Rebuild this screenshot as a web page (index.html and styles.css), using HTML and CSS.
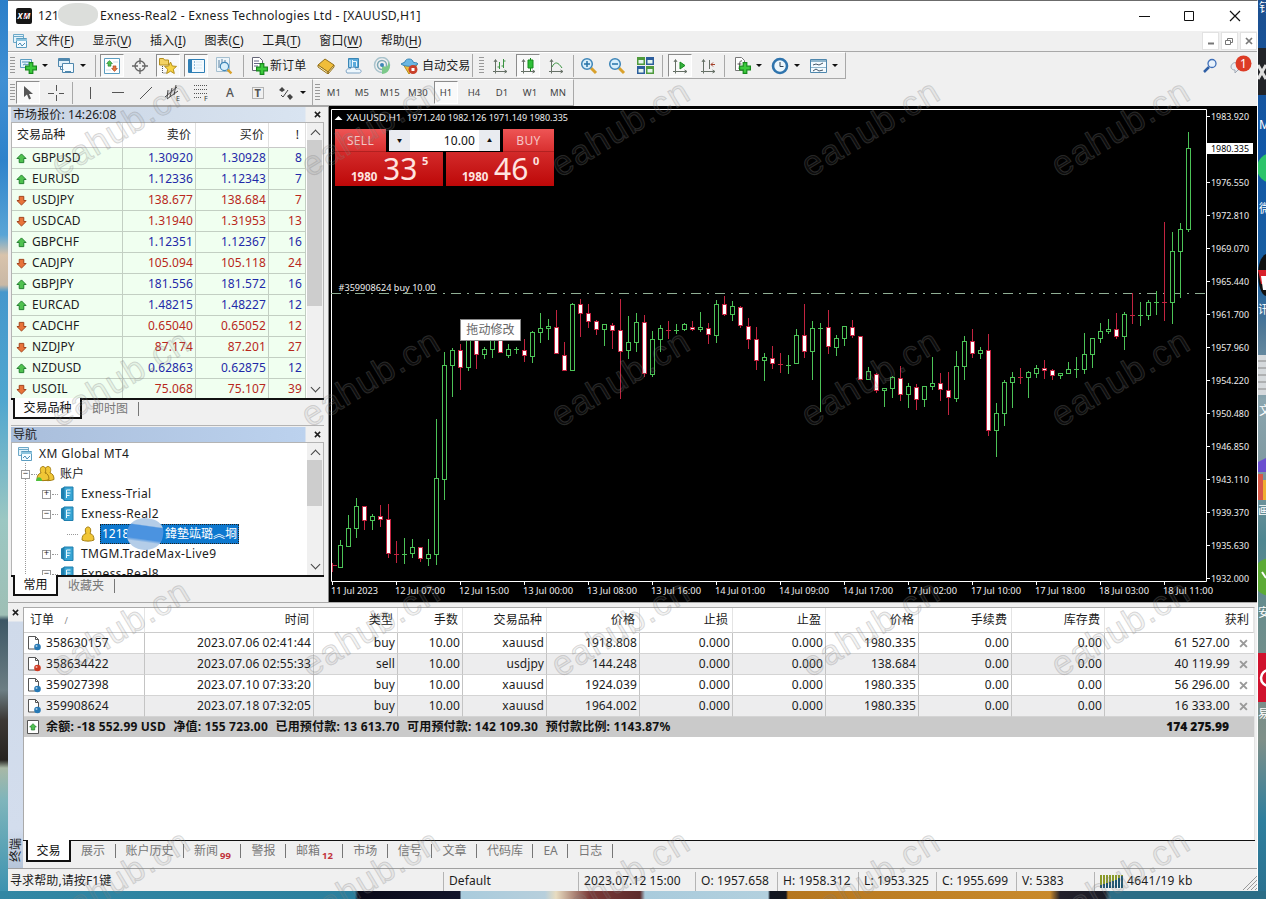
FILE: index.html
```html
<!DOCTYPE html>
<html lang="zh-CN">
<head>
<meta charset="utf-8">
<title>Exness-Real2 - Exness Technologies Ltd - [XAUUSD,H1]</title>
<link rel="stylesheet" href="styles.css">
</head>
<body>

<!-- shared icons -->
<svg width="0" height="0" class="defs">
  <symbol id="plus" viewBox="0 0 10 10"><path d="M3.500.5h3v3h3v3h-3v3h-3v-3h-3v-3h3z" fill="#3ccb3c" stroke="#168a1c"/></symbol>
  <symbol id="charts" viewBox="0 0 16 16">
    <path d="M1.500 1.500h10v8h-10z" fill="#e4f3fb" stroke="#6da9c8"/><path d="M1 3.500h11" stroke="#6da9c8"/>
    <path d="M4.500 5.500h10v9h-10z" fill="#f4fbff" stroke="#5b9dc0"/><path d="M4 7h11" stroke="#8cc4de" stroke-width="2"/>
    <path d="M6 12l2-2 2 3 3-3" fill="none" stroke="#4a8db5"/>
  </symbol>
  <symbol id="up" viewBox="0 0 12 12"><path d="M6 1l5 5H8.500v4.500h-5V6H1z" fill="#4fc24f" stroke="#1c7a2a"/></symbol>
  <symbol id="down" viewBox="0 0 12 12"><path d="M6 11l5-5H8.500V1.500h-5V6H1z" fill="#e8743a" stroke="#9c3a14"/></symbol>
  <symbol id="server" viewBox="0 0 14 16">
    <path d="M1 2.500l3-1.500v13l-3-1.500z" fill="#1f7fae"/><path d="M4 1h9v13.500H4z" fill="#38a5d4" stroke="#1f7fae"/>
    <path d="M6.500 12V4h4M6.500 7h4M6.500 9.500h3" fill="none" stroke="#e8f8ff"/>
  </symbol>
  <symbol id="person" viewBox="0 0 14 16">
    <path d="M1 14c0-4 1.500-6 4-6.500C3.500 4 4.500 1 7 1s3.500 3 2 6.500c2.500.5 4 2.500 4 6.500-3 1.500-9 1.500-12 0z" fill="#f0c636" stroke="#a57e10"/>
  </symbol>
  <symbol id="order" viewBox="0 0 16 16">
    <path d="M2.500 1.500h7l3 3v9.500h-10z" fill="#fff" stroke="#555"/><path d="M9.500 1.500v3h3" fill="none" stroke="#555"/>
    <circle cx="11.500" cy="12" r="3.300" fill="currentColor"/><circle cx="10.500" cy="11" r="1" fill="#fff" opacity=".6"/>
  </symbol>
  <symbol id="axes" viewBox="0 0 16 16"><path d="M3.500 2v11.500H15M2 4l1.500-2.500L5 4M12.500 12l2.500 1.500-2.500 1.500M1 13.500h2.500v2" fill="none" stroke="#667066"/></symbol>
  <symbol id="lens" viewBox="0 0 18 18"><path d="M11 11l5 5" stroke="#d9a12c" stroke-width="3"/><circle cx="7" cy="7" r="5.300" fill="#d8effb" stroke="#3f86b8" stroke-width="1.500"/></symbol>
  <symbol id="x" viewBox="0 0 8 8"><path d="M1 1l6 6M7 1l-6 6" stroke="currentColor" stroke-width="1.700"/></symbol>
</svg>

<div class="window">

  <div class="titlebar">
    <svg class="logo" width="16" height="16"><rect width="16" height="16" rx="2" fill="#161616"/><text x="1.500" y="11" font-size="8" font-weight="bold" font-style="italic" fill="#fff" textLength="13">XM</text><path d="M8 10l4-5" stroke="#d33"/></svg>
    <span class="acct">121<i class="blur"></i></span>
    <span class="caption">Exness-Real2 - Exness Technologies Ltd - [XAUUSD,H1]</span>
    <svg class="winbtns" width="104" height="12"><path d="M0 6.500h11" stroke="#111"/><path d="M45.500 1.500h9v9h-9z" fill="none" stroke="#111"/><path d="M91 1l10 10M101 1L91 11" stroke="#111" stroke-width="1.200"/></svg>
  </div>

  <div class="menubar">
    <svg width="16" height="16"><use href="#charts"/></svg>
    <span>文件(<u>F</u>)</span><span>显示(<u>V</u>)</span><span>插入(<u>I</u>)</span><span>图表(<u>C</u>)</span><span>工具(<u>T</u>)</span><span>窗口(<u>W</u>)</span><span>帮助(<u>H</u>)</span>
    <div class="mdi">
      <b><svg width="8" height="8"><path d="M1 6.500h6" stroke="#777" stroke-width="2"/></svg></b>
      <b><svg width="9" height="9"><path d="M2.500 3V1.500h5v4H6M.5 3.500h5v4h-5z" fill="none" stroke="#777"/></svg></b>
      <b><svg width="8" height="8" color="#777"><use href="#x"/></svg></b>
    </div>
  </div>

  <div class="tools-row">
    <div class="toolbar first">
      <i class="grip"></i>
      <div class="tool"><svg width="18" height="18"><path d="M1.500 2.500h11v8h-11z" fill="#e4f3fb" stroke="#5b9dc0"/><path d="M3 5h8M4 8l2-1 2 1 2-1" stroke="#4a8db5" fill="none"/><use href="#plus" x="6" y="5" width="12" height="12"/></svg></div><i class="drop"></i>
      <div class="tool"><svg width="18" height="18"><path d="M1.500 1.500h11v8h-11z" fill="#dff0fa" stroke="#4f87ad"/><path d="M1 3h12" stroke="#4f87ad" stroke-width="2"/><path d="M3.500 9.500v3h3M5.500 6.500h11v9h-11z" fill="#f4fbff" stroke="#4f87ad"/><path d="M8 15h6" stroke="#4f87ad" stroke-width="2"/></svg></div><i class="drop"></i>
      <i class="sep w8"></i>
      <div class="tool on"><svg width="16" height="16"><path d="M.5.5h15v15H.5z" fill="#fff" stroke="#5b9dc0"/><path d="M3 4h4M9 4h5M2 12h5" stroke="#cfe0ea"/><use href="#up" x="2" y="2" width="7" height="7"/><use href="#down" x="7" y="7" width="7" height="7"/></svg></div>
      <div class="tool"><svg width="16" height="16"><circle cx="8" cy="8" r="5" fill="none" stroke="#666" stroke-width="1.300"/><path d="M8 0v6M8 10v6M0 8h6M10 8h6" stroke="#666" stroke-width="1.300"/></svg></div>
      <div class="tool on"><svg width="18" height="18"><path d="M.5 1.500h4l1 1.500h4v5h-9z" fill="#f3d264" stroke="#b58f1d"/><path d="M3.500 9v7h4" stroke="#555" stroke-dasharray="1 1" fill="none"/><path d="M11.500 5l1.800 4 4.200.4-3.200 2.800 1 4.300-3.800-2.300-3.800 2.300 1-4.300-3.200-2.800 4.200-.4z" fill="#f7d445" stroke="#b58f1d"/></svg></div>
      <div class="tool on"><svg width="17" height="16"><path d="M.5 1.500h16v13H.5z" fill="#f3faff" stroke="#2f7fb5"/><path d="M1 2h3v12H1z" fill="#2f7fb5"/><path d="M6 4h1M6 7h1M6 10h1" stroke="#2f7fb5"/><path d="M8 4h6M8 7h6M8 10h6" stroke="#dbe8f0"/></svg></div>
      <div class="tool"><svg width="18" height="18"><path d="M1.500.5h13v14h-13z" fill="#edf5fa" stroke="#a5bfd0"/><path d="M4 3v8M7 2v6M10 3v4" stroke="#5b80a0"/><use href="#lens" x="4" y="4" width="14" height="14"/></svg></div>
      <i class="sep w8"></i>
      <div class="tool label order"><svg width="18" height="18"><path d="M2.500.5h7l3 3v10h-10z" fill="#fff" stroke="#667"/><path d="M4 4h5M4 6.500h7M4 9h4" stroke="#668"/><use href="#plus" x="6" y="6" width="12" height="12"/></svg>新订单</div>
      <div class="tool"><svg width="18" height="16"><path d="M1 7l7-6 9 6-6 7z" fill="#f0bd3a" stroke="#94701a"/><path d="M1 7v2l10 7v-2zM17 7v2l-6 7v-2z" fill="#fff2c0" stroke="#94701a"/></svg></div>
      <div class="tool"><svg width="18" height="18"><path d="M3.500 1.500h10v9h-10z" fill="#5aa9da" stroke="#3a86b5"/><path d="M7.500 3v7M7.500 4.500h4v5M5 3v7" stroke="#e8f6fe" fill="none"/><path d="M2 16c-2.500-3 1-5 3-4 2-3 6-2 6 .5 5-2 7 3.500 3 3.500z" fill="#edf7fd" stroke="#7fa3c3"/></svg></div>
      <div class="tool"><svg width="18" height="18" fill="none"><circle cx="9" cy="8" r="7.500" stroke="#a9c3cc" stroke-width="1.500"/><circle cx="9" cy="8" r="4.500" stroke="#7fa9b6" stroke-width="1.500"/><path d="M9 8v9c5 0 8-4 8-9l-2-4c1 4-1 8-6 4z" fill="#7cc98a"/><circle cx="9" cy="8" r="2" fill="#3f86b8"/></svg></div>
      <div class="tool label auto"><svg width="20" height="18"><path d="M3 7l6 10 8-9z" fill="#f0bd3a" stroke="#b58f1d"/><path d="M1 7c1-1 3-1 4-2 0-4 8-4 8 0 1 1 4 0 5 2-4 3-13 3-17 0z" fill="#6bb7e3" stroke="#3a86b5"/><circle cx="13" cy="12.500" r="4.500" fill="#c9402a"/><path d="M11.500 11h3v3h-3z" fill="#fff"/></svg>自动交易</div>
      <i class="grip"></i>
      <div class="tool bars"><svg width="16" height="16"><use href="#axes"/><path d="M7.500 4v7M5.500 9h2M11.500 1v9M11.500 3h2M9.500 8h2" stroke="#3a9340"/></svg></div>
      <div class="tool on"><svg width="16" height="16"><use href="#axes"/><path d="M10.500 0v13" stroke="#168a1c"/><path d="M8 2h5v8H8z" fill="#2fc038" stroke="#168a1c"/></svg></div>
      <div class="tool"><svg width="16" height="16"><use href="#axes"/><path d="M4 9c3-6 6-5 10 1" stroke="#3a9340" fill="none"/></svg></div>
      <i class="sep w5"></i>
      <div class="tool"><svg width="18" height="18"><use href="#lens"/><path d="M4 7h6M7 4v6" stroke="#2673a8" stroke-width="1.500"/></svg></div>
      <div class="tool"><svg width="18" height="18"><use href="#lens"/><path d="M4 7h6" stroke="#2673a8" stroke-width="1.500"/></svg></div>
      <div class="tool"><svg width="17" height="17"><path d="M0 0h8v8H0zM9 9h8v8H9z" fill="#4f9a3c"/><path d="M9 0h8v8H9zM0 9h8v8H0z" fill="#2c5e9c"/><path d="M1.500 3h5v3.500h-5zM10.500 3h5v3.500h-5zM1.500 12h5v3.500h-5zM10.500 12h5v3.500h-5z" fill="#e6f5ee"/></svg></div>
      <i class="sep w7"></i>
      <div class="tool on"><svg width="16" height="16"><use href="#axes"/><path d="M8 4l5 3.500-5 3.500z" fill="#35b13d" stroke="#168a1c"/></svg></div>
      <div class="tool"><svg width="16" height="16"><use href="#axes"/><path d="M9.500 2v9" stroke="#667066"/><path d="M15 6.500h-4M13 4.500l-2 2 2 2" stroke="#a3402a" fill="none"/></svg></div>
      <i class="sep w6"></i>
      <div class="tool"><svg width="18" height="18"><path d="M2.500.5h6l3 3v10h-9z" fill="#fff" stroke="#777"/><path d="M9 4c-3-1-2 3-3 8M4.500 7h4" stroke="#555" fill="none"/><use href="#plus" x="6" y="5" width="12" height="12"/></svg></div><i class="drop"></i>
      <div class="tool"><svg width="18" height="18"><circle cx="9" cy="9" r="7" fill="#eef7fc" stroke="#2f74ad" stroke-width="2.600"/><path d="M9 5v4.500h3.500" stroke="#345" fill="none"/></svg></div><i class="drop"></i>
      <div class="tool"><svg width="17" height="16"><path d="M.5 1.500h16v13H.5z" fill="#f4fbff" stroke="#4f87ad"/><path d="M1 3h15" stroke="#8fb5cc" stroke-width="2"/><path d="M1 9.500h15" stroke="#8fb5cc"/><path d="M3 7l3-1 3 1 4-2M3 13l3-2 3 2 4-1" stroke="#456" fill="none"/></svg></div><i class="drop"></i>
    </div>
    <div class="right-tools">
      <svg width="15" height="15"><path d="M1 14l5-5" stroke="#2f5fa5" stroke-width="2.500"/><circle cx="9" cy="5.500" r="4" fill="#e8f2fc" stroke="#3f6fb8" stroke-width="1.300"/></svg>
      <svg width="24" height="22"><path d="M3 12c0-3 3-5 6-4.500 5 0 6 6 1 7.500l-3 3v-3c-2 0-4-1-4-3z" fill="#e9edf2" stroke="#a0a8b4"/><circle cx="15.500" cy="8.500" r="8" fill="#dd3b25"/><text x="12" y="13" font-size="12" fill="#fff">1</text></svg>
    </div>
  </div>

  <div class="tools-row second">
    <div class="toolbar draw">
      <i class="grip"></i>
      <div class="tool on"><svg width="12" height="16"><path d="M2 1v11l3-2.500 2 5 2-1-2-4.500h4z" fill="#555"/></svg></div>
      <div class="tool"><svg width="16" height="16"><path d="M8.500 0v6M8.500 10v6M0 8.500h6M11 8.500h5" stroke="#555"/></svg></div>
      <i class="sep w6"></i>
      <div class="tool"><svg width="3" height="14"><path d="M1.500 1v12" stroke="#555"/></svg></div>
      <div class="tool"><svg width="14" height="3"><path d="M1 1.500h12" stroke="#555"/></svg></div>
      <div class="tool"><svg width="14" height="14"><path d="M1 13L13 1" stroke="#555"/></svg></div>
      <div class="tool"><svg width="20" height="20"><path d="M1 14L13 4M3 16L14 8M4 7L3 15M8 5L6 14M12 2l-2 10" stroke="#444"/><text x="12" y="18" font-size="7" fill="#333">E</text></svg></div>
      <div class="tool"><svg width="20" height="20"><path d="M2 2.500h14M2 6.500h14M2 10.500h14M2 14.500h8" stroke="#555" stroke-dasharray="1 1"/><text x="12" y="18" font-size="7" fill="#333">F</text></svg></div>
      <div class="tool letter">A</div>
      <div class="tool"><svg width="16" height="18"><path d="M2.500 3.500h11v11h-11z" fill="none" stroke="#777" stroke-dasharray="1 1"/><text x="4.500" y="13" font-size="11" font-weight="bold" fill="#555">T</text></svg></div>
      <div class="tool"><svg width="16" height="14"><path d="M1 4l3-3 3 3-3 2zM9 10l3-2 3 3-3 3z" fill="#444"/><path d="M3 9l2 2 5-7" stroke="#444" fill="none"/></svg></div><i class="drop"></i>
    </div>
    <div class="toolbar frames">
      <i class="grip"></i>
      <div class="tool">M1</div><div class="tool">M5</div><div class="tool">M15</div><div class="tool">M30</div><div class="tool on">H1</div><div class="tool">H4</div><div class="tool">D1</div><div class="tool">W1</div><div class="tool">MN</div>
    </div>
  </div>

  <div class="workspace">
    <div class="dock">
      <div class="panel market">
        <div class="panel-head"><span>市场报价: 14:26:08</span><svg width="7" height="7"><use href="#x"/></svg></div>
        <div class="panel-body">
          <table class="quotes">
            <colgroup><col class="c-sym"><col class="c-bid"><col class="c-ask"><col></colgroup>
            <thead><tr><th>交易品种</th><th>卖价</th><th>买价</th><th>!</th></tr></thead>
            <tbody id="quotes"></tbody>
          </table>
          <div class="scroll"><div class="thumb"></div></div>
        </div>
        <div class="tabs"><span class="active">交易品种</span><span>即时图</span></div>
      </div>

      <div class="panel nav">
        <div class="panel-head"><span>导航</span><svg width="7" height="7"><use href="#x"/></svg></div>
        <div class="panel-body">
          <div class="tree">
            <div class="node"><svg width="16" height="16"><use href="#charts"/></svg>XM Global MT4</div>
            <div class="node l1"><i class="box">−</i><svg width="20" height="18"><use href="#person" x="6" y="0" width="14" height="17"/><use href="#person" x="1" y="0" width="14" height="17"/><path d="M1 16c0-5 6-5 6 0z" fill="#4fbf3c"/></svg>账户</div>
            <div class="node l2"><i class="box">+</i><svg width="14" height="16"><use href="#server"/></svg>Exness-Trial</div>
            <div class="node l2"><i class="box">−</i><svg width="14" height="16"><use href="#server"/></svg>Exness-Real2</div>
            <div class="node l3"><svg width="14" height="16"><use href="#person"/></svg><span class="sel"><span>1218</span><span>鍏墊竑璐︽埛</span><i class="blur"></i></span></div>
            <div class="node l2"><i class="box">+</i><svg width="14" height="16"><use href="#server"/></svg>TMGM.TradeMax-Live9</div>
            <div class="node l2"><i class="box">−</i><svg width="14" height="16"><use href="#server"/></svg>Exness-Real8</div>
          </div>
          <div class="scroll"><div class="thumb"></div></div>
        </div>
        <div class="tabs"><span class="active">常用</span><span>收藏夹</span></div>
      </div>
    </div>

    <div class="chart">
      <svg id="chart" width="928" height="496" viewBox="329 106 928 496"></svg>
      <div class="trade">
        <div class="row top">
          <div class="side">SELL</div>
          <div class="lots"><i>▼</i><span>10.00</span><i>▲</i></div>
          <div class="side">BUY</div>
        </div>
        <div class="row">
          <div class="price"><small>1980</small><big>33</big><sup>5</sup></div>
          <div class="price"><small>1980</small><big>46</big><sup>0</sup></div>
        </div>
      </div>
      <div class="tip">拖动修改</div>
    </div>
  </div>

  <div class="terminal">
    <div class="strip"><svg width="7" height="7"><use href="#x"/></svg><span>终端</span></div>
    <div class="term-main">
      <div class="term-body">
        <table class="orders">
          <colgroup><col class="o1"><col class="o2"><col class="o3"><col class="o4"><col class="o5"><col class="p"><col class="p"><col class="p"><col class="p"><col class="p"><col class="p"><col></colgroup>
          <thead><tr><th>订单 <em>/</em></th><th>时间</th><th>类型</th><th>手数</th><th>交易品种</th><th>价格</th><th>止损</th><th>止盈</th><th>价格</th><th>手续费</th><th>库存费</th><th>获利</th></tr></thead>
          <tbody id="orders"></tbody>
        </table>
        <div class="balance">
          <svg width="12" height="14"><path d="M.5.5h11v13H.5z" fill="#fff" stroke="#555"/><use href="#up" x="2" y="3" width="8" height="8"/></svg>
          <span>余额: -18 552.99 USD</span><span>净值: 155 723.00</span><span>已用预付款: 13 613.70</span><span>可用预付款: 142 109.30</span><span>预付款比例: 1143.87%</span>
          <b>174 275.99</b>
        </div>
      </div>
      <div class="tabs">
        <span class="active">交易</span><span>展示</span><span>账户历史</span><span>新闻<b>99</b></span><span>警报</span><span>邮箱<b>12</b></span><span>市场</span><span>信号</span><span>文章</span><span>代码库</span><span>EA</span><span>日志</span>
      </div>
    </div>
  </div>

  <div class="status">
    <span class="s-help">寻求帮助,请按F1键</span><span class="s-prof">Default</span><span class="s-date">2023.07.12 15:00</span><span class="s-o">O: 1957.658</span><span class="s-h">H: 1958.312</span><span class="s-l">L: 1953.325</span><span class="s-c">C: 1955.699</span><span class="s-v">V: 5383</span>
    <span class="s-net"><svg width="24" height="13" shape-rendering="crispEdges"><path d="M1 0v13M4 0v13M7 0v13M10 0v13M13 0v13M16 0v13M19 0v13M22 0v13" stroke="#8a9a28" stroke-width="2"/><path d="M1 10v3M4 9v4M7 8v5M10 7v6M13 6v7M16 5v8M19 3v10M22 1v12" stroke="#1d5470" stroke-width="2"/></svg>4641/19 kb</span>
    <svg class="resize" width="15" height="15"><path d="M1 15L15 1M5 15L15 5M9 15l6-6M13 15l2-2" stroke="#999"/></svg>
  </div>
</div>

<!-- desktop icons behind the right edge -->
<svg class="desk" width="8" height="899">
  <rect y="48" width="8" height="47" fill="#222428"/><path d="M0 65l8 14M0 79l8-14" stroke="#ddd" stroke-width="3"/>
  <circle cx="14" cy="168" r="15" fill="#2bc46a"/>
  <path d="M8 254c-12 6-9 40 0 42z" fill="#111"/><path d="M0 270h8v14H3z" fill="#d9202a"/><path d="M3 276h5v14H5z" fill="#fff"/>
  <rect y="355" width="8" height="40" fill="#d5d9dc"/><path d="M0 361h8M0 368h8M0 375h8M0 382h8M0 389h8" stroke="#888"/>
  <path d="M0 462l8-4v14H0z" fill="#6a4fd0"/><path d="M0 474h5v26H0z" fill="#d8574a"/><path d="M5 480h3v20H5z" fill="#f0b030"/>
  <circle cx="13" cy="577" r="19" fill="#5cab35"/><path d="M4 572l4 6" stroke="#fff" stroke-width="2"/>
  <rect y="653" width="8" height="49" fill="#d0122d"/><circle cx="11" cy="678" r="8" fill="none" stroke="#fff" stroke-width="2.500"/>
  <g fill="#fff" font-size="12"><text x="1" y="12">钉</text><text x="1" y="129">M</text><text x="1" y="213">微</text><text x="0" y="314">讯</text><text x="1" y="415">文</text><text x="0" y="515">画</text><text x="0" y="617">安</text><text x="0" y="718">易</text></g>
</svg>

<svg class="marks" id="marks" width="1266" height="899"></svg>

<script src="script.js"></script>
</body>
</html>
```
FILE: styles.css
```css
* { box-sizing: border-box; }
body {
    margin: 0;
    width: 1266px;
    height: 899px;
    overflow: hidden;
    position: relative;
    font: 12px/16px "Noto Sans", "Noto Sans CJK SC", sans-serif;
    letter-spacing: .1px;
    color: #1c1c1c;
    background:
        linear-gradient(90deg, #3287a4 0, #2b7f9d 355px, #0a0a18 358px, #12142a 460px, #a9cbdc 461px, #b7cfdc 545px, #e8dcc0 556px, #7a3a38 590px, #5d2b2b 640px, #a9cbdc 645px, #b3d0de 768px, #111520 770px, #14161f 786px, #b5761f 788px, #c98a2c 1050px, #23202a 1060px, #1c1c26 1105px, #2c6d86 1110px) 0 891px / 1266px 8px no-repeat,
        linear-gradient(#1c4f8f 0, #1158a8 150px, #1a5f9f 280px, #4f7896 330px, #8aa5ae 400px, #7f98a0 470px, #4e8690 540px, #6b8d8c 620px, #7f8f88 740px, #2e7f9e 820px, #2b7290) 1258px 0 / 8px 891px no-repeat,
        linear-gradient(#2b7fc9 0, #3f8fd3 80px, #2e82cb 160px, #5aa5d6 235px, #d8c3ab 255px, #c9b8a5 285px, #4597cc 292px, #4fa6cf 400px, #9bc7c2 520px, #9ebfb5 615px, #3c5665 620px, #6c7e84 690px, #3c3835 720px, #262320 760px, #a8b8a6 768px, #7fb5bb 800px, #3d93b0) 0 0 / 8px 891px no-repeat;
}
i, em { font-style: normal; }
.defs { position: absolute; }
svg { flex: none; display: block; }

.window {
    width: 1250px;
    height: 891px;
    margin-left: 8px;
    background: #f0f0f0;
    border-top: 1px solid #6b6b6b;
    border-right: 1px solid #fff;
    display: flex;
    flex-direction: column;
}

/* title and menu */
.titlebar {
    height: 30px;
    flex: none;
    background: #fff;
    display: flex;
    align-items: center;
    padding: 0 14px 0 8px;
}
.acct { position: relative; margin-left: 6px; width: 62px; }
.titlebar .blur {
    position: absolute;
    left: 20px;
    top: -5px;
    width: 40px;
    height: 23px;
    border-radius: 45%;
    background: #dcdedb;
}
.titlebar .caption { flex: 1; font-size: 12.2px; letter-spacing: .22px; }
.menubar {
    height: 21px;
    flex: none;
    display: flex;
    align-items: center;
    padding-left: 4px;
    border-bottom: 1px solid #a8a8a8;
}
.menubar > svg { margin-right: 8px; }
.menubar > span { margin-right: 18.6px; }
.menubar u { text-underline-offset: 2px; }
.mdi { margin-left: auto; display: flex; gap: 2px; }
.mdi b {
    width: 17px;
    height: 18px;
    background: #fff;
    border: 1px solid #e2e2e2;
    display: flex;
    align-items: center;
    justify-content: center;
}

/* toolbars */
.tools-row { height: 27px; flex: none; display: flex; justify-content: space-between; }
.tools-row.second { justify-content: flex-start; }
.toolbar {
    display: flex;
    align-items: center;
    height: 27px;
    border-bottom: 1px solid #a8a8a8;
    border-right: 1px solid #a8a8a8;
    border-top: 1px solid #fff;
}
.toolbar.first { width: 838px; }
.toolbar.draw { width: 305px; }
.toolbar.frames { width: 261px; font-size: 9.5px; color: #444; }
.grip {
    width: 5px;
    height: 18px;
    margin: 0 1px 0 2px;
    flex: none;
    background: repeating-linear-gradient(#999 0 1px, #f0f0f0 1px 3px);
}
.tool {
    width: 24px;
    height: 23px;
    margin-right: 4px;
    flex: none;
    display: flex;
    align-items: center;
    justify-content: center;
}
.tool.on { background: #f9f9f9; border: 1px solid #fff; border-top-color: #8c8c8c; border-left-color: #8c8c8c; }
.tool:has(+ .drop) { margin-right: 0; }
.tool.label { justify-content: flex-start; white-space: nowrap; }
.tool.order { width: 62px; gap: 2px; padding-left: 2px; }
.tool.auto { width: 75px; gap: 2px; padding-left: 2px; border-right: 1px solid #a8a8a8; }
.tool.bars { margin-left: 3px; }
.tool.letter { color: #555; font-weight: 500; }
.frames .tool:nth-child(2) { margin-left: 1px; }
.drop { width: 10px; margin-right: 4px; flex: none; }
.drop::after {
    content: "";
    display: block;
    margin-left: 2px;
    width: 0;
    border: 3px solid transparent;
    border-top-color: #111;
    border-bottom: 0;
}
.sep { height: 22px; flex: none; background: linear-gradient(#a8a8a8, #a8a8a8) 3px 0 / 1px 100% no-repeat; }
.w5 { width: 5px; background-position: 1px 0; }
.w6 { width: 6px; background-position: 0 0; }
.w7 { width: 7px; background-position: 1px 0; }
.w8 { width: 8px; }
.right-tools { display: flex; align-items: center; gap: 10px; padding-right: 5px; }

/* left dock */
.workspace { height: 496px; flex: none; display: flex; }
.dock { width: 321px; padding: 0 4px 0 3px; border-right: 1px solid #8a8a8a; border-top: 1px solid #a8a8a8; }
.panel-head {
    height: 15px;
    display: flex;
    align-items: center;
    justify-content: space-between;
    padding: 0 3px 0 2px;
    background: linear-gradient(90deg, #c9d4e3, #d9e4f1 294px, #f0f0f0 295px);
}
.nav .panel-head { background: linear-gradient(90deg, #a9bedb, #bcd2ee 294px, #f0f0f0 295px); }
.panel-body { display: flex; background: #fff; border: 1px solid #b4b4b4; border-bottom: 0; overflow: hidden; }
.market { height: 315px; }
.market .panel-body { height: 276px; }
.nav { margin-top: 3px; padding-top: 1px; border-top: 1px solid #b4b4b4; }
.nav .panel-body { height: 133px; }
table { border-collapse: separate; border-spacing: 0; table-layout: fixed; }
.quotes { width: 294px; height: max-content; }
.c-sym { width: 111px; }
.c-bid, .c-ask { width: 73px; }
.quotes th {
    height: 25px;
    font-weight: normal;
    text-align: right;
    padding: 0 4px;
    border-right: 1px solid #e0e0e0;
    border-bottom: 1px solid #c8c8c8;
}
.quotes th:first-child { text-align: left; padding-left: 5px; }
.quotes th:last-child { padding-right: 6px; }
.quotes td {
    height: 21px;
    padding: 0 2px;
    text-align: right;
    background: #f0fff0;
    border-right: 1px solid #c3cfc3;
    border-bottom: 1px solid #c3cfc3;
}
.quotes td:first-child { text-align: left; padding-left: 4px; }
.quotes td:last-child { padding-right: 3px; }
.quotes td svg { display: inline-block; vertical-align: -2px; margin-right: 5px; }
.quotes .buy td + td { color: #1f2aa8; }
.quotes .sell td + td { color: #b8281c; }
.scroll {
    width: 16px;
    margin-left: auto;
    background: #f0f0f0;
    position: relative;
    padding-top: 17px;
}
.scroll .thumb { background: #cdcdcd; width: 15px; }
.scroll::before, .scroll::after {
    content: "";
    position: absolute;
    left: 5px;
    top: 8px;
    width: 6px;
    height: 6px;
    border: solid #444;
    border-width: 1.5px 0 0 1.5px;
    transform: rotate(45deg);
}
.scroll::after { top: auto; bottom: 7px; transform: rotate(225deg); }
.market .thumb { height: 166px; }
.nav .thumb { height: 46px; }

.tabs { display: flex; border-top: 2px solid #111; color: #777; height: 24px; letter-spacing: 0; }
.tabs span {
    height: 14px;
    line-height: 14px;
    margin-top: 2px;
    padding: 0 9.5px 0 10px;
    border-right: 1px solid #777;
    white-space: nowrap;
}
.tabs .active {
    height: 21px;
    line-height: 19px;
    margin-top: -2px;
    margin-left: 2px;
    padding: 0 8.5px;
    color: #111;
    background: #fff;
    border: 2px solid #111;
    border-top: 0;
}

/* navigator tree */
.tree { flex: 1; padding-top: 1px; overflow: hidden; background: repeating-linear-gradient(#999 0 1px, #fff 1px 2px) 13px 20px / 1px 200px no-repeat; }
.node { height: 20px; display: flex; align-items: center; gap: 5px; padding-left: 5px; letter-spacing: .42px; }
.node.l1 { padding-left: 9px; gap: 5px; letter-spacing: 0; }
.node.l2 { padding-left: 30px; gap: 8.5px; letter-spacing: .38px; }
.node.l3 { padding-left: 69px; gap: 4px; background: repeating-linear-gradient(90deg, #999 0 1px, #fff 1px 2px) 55px 10px / 11px 1px no-repeat; }
.node svg { margin-right: 1px; }
.node.l1 svg { margin-right: 0; }
.node.l2 svg { margin-right: -1px; }
.box { width: 9px; height: 9px; border: 1px solid #999; background: #fff; font: 9px/7px "Liberation Mono", monospace; text-align: center; letter-spacing: 0; flex: none; position: relative; }
.box::after { content: ""; position: absolute; left: 9px; top: 3px; width: 6px; border-top: 1px dotted #999; }
.sel { position: relative; display: flex; justify-content: space-between; width: 139px; height: 20px; line-height: 18px; padding: 0 1px; background: #0d78cf; color: #fff; border: 1px dotted #222; letter-spacing: 0; }
.sel .blur { position: absolute; left: 26px; top: -7px; width: 36px; height: 32px; background: linear-gradient(#b4cde8 22%, #4b93e0 26% 66%, #b4cde8 76%); border-radius: 50% 40% 50% 45%; transform: rotate(8deg); }

/* chart */
.chart { position: relative; width: 928px; background: #000; }
.chart text { font-size: 9.4px; fill: #eee; letter-spacing: 0; }
.trade { position: absolute; left: 6px; top: 23px; width: 219px; background: #000; color: #ffe4e0; }
.trade .row { display: flex; gap: 3px; }
.trade .top { height: 23px; }
.side { width: 51px; height: 23px; line-height: 23px; text-align: center; background: linear-gradient(#ee5555, #d93030); border-bottom: 1px solid #b12020; color: #f5c5c5; letter-spacing: .3px; }
.lots { width: 111px; height: 21px; background: #fff; display: flex; color: #111; line-height: 21px; margin-top: 1px; }
.lots i { width: 21px; background: #e9ebf0; font-size: 5px; text-align: center; }
.lots span { flex: 1; text-align: right; padding-right: 4px; }
.price { width: 108px; height: 34px; background: linear-gradient(#d32a2a, #bd0808); display: flex; align-items: flex-end; padding-left: 16px; position: relative; line-height: 1; }
.price small { font-size: 11.5px; font-weight: bold; padding-bottom: 4px; width: 32px; letter-spacing: 0; }
.price big { font-size: 30px; line-height: 34px; letter-spacing: 0; width: 36px; }
.price sup { font-size: 11px; font-weight: bold; align-self: flex-start; padding-top: 3px; margin-left: 3px; }
.tip { position: absolute; left: 131px; top: 213px; width: 61px; height: 22px; line-height: 20px; text-align: center; background: #fff; border: 1px solid #888; color: #666; }

/* terminal */
.terminal { height: 266px; flex: none; display: flex; border-top: 1px solid #aaa; padding-top: 4px; }
.strip { width: 15px; padding: 2px 0 6px; background: linear-gradient(#f0f0f0 0 14px, #cfdaea 15px, #d3dded 85%, #b6c5d9); display: flex; flex-direction: column; justify-content: space-between; align-items: center; }
.strip span { writing-mode: vertical-rl; text-orientation: sideways; transform: rotate(180deg); line-height: 14px; letter-spacing: 0; }
.term-main { width: 1232px; }
.term-body { height: 233px; background: #fff; border: 1px solid #aaa; border-right-color: #e4e4e4; border-bottom: 0; }
.orders { width: 1230px; }
.o1 { width: 121px; } .o2 { width: 169px; } .o3 { width: 84px; } .o4 { width: 65px; } .o5 { width: 84px; } .p { width: 93px; }
.orders th { height: 25px; font-weight: normal; text-align: right; padding: 0 4px; border-right: 1px solid #e4e4e4; border-bottom: 1px solid #ccc; }
.orders th:first-child { text-align: left; padding-left: 6px; }
.orders em { color: #888; font-size: 9px; margin-left: 7px; }
.orders td { height: 21px; padding: 0 2px; text-align: right; border-right: 1px solid #c4c4c4; border-bottom: 1px solid #d4d4d4; white-space: nowrap; }
.orders td:first-child { text-align: left; }
.orders td:last-child { border-right: 0; padding-right: 6px; }
.orders tr:nth-child(even) td { background: #ededee; }
.orders td svg { display: inline-block; vertical-align: -4px; margin-right: 4px; }
.orders td .cls { margin: 0 0 0 6px; vertical-align: -1px; color: #999; }
.balance { height: 20px; display: flex; align-items: center; background: #cacaca; font-weight: bold; padding-left: 3px; letter-spacing: .19px; color: #111; }
.balance svg { margin-right: 7px; }
.balance span { margin-right: 7.5px; white-space: nowrap; }
.balance b { margin-left: auto; margin-right: 25px; letter-spacing: 0; }
.terminal .tabs { height: 26px; border-top-width: 1px; }
.terminal .tabs span { margin-top: 3px; }
.terminal .tabs .active { margin-top: -1px; margin-left: 3px; height: 22px; line-height: 21px; border-width: 0 2px 2px 2px; }
.tabs b { color: #c2343c; font-size: 9.5px; line-height: 8px; vertical-align: -4px; margin-left: 2px; }

/* status bar */
.status { height: 23px; flex: none; border-top: 1px solid #a0a0a0; display: flex; align-items: stretch; line-height: 18px; padding-top: 3px; }
.status span { border-left: 1px solid #b4b4b4; padding-left: 5px; white-space: nowrap; }
.status .s-help { width: 435px; border: 0; padding-left: 2px; }
.s-prof { width: 135px; } .s-date { width: 117px; } .s-o { width: 82px; } .s-h { width: 81px; } .s-l { width: 78px; } .s-c { width: 80px; } .s-v { width: 78px; }
.s-net { display: flex; gap: 3px; letter-spacing: .3px; }
.s-net svg { margin-top: 3px; }
.resize { margin: 3px 0 0 auto; }

.desk { position: absolute; right: 0; top: 0; }
.marks { position: absolute; left: 0; top: 0; pointer-events: none; }
.marks text { font: 35px "Liberation Sans", sans-serif; fill: rgba(128,128,128,.09); stroke: rgba(128,128,128,.3); stroke-width: 1; }
```
FILE: script.js
```javascript
var quotes = [
    ['GBPUSD', '1.30920', '1.30928', 8, 1],
    ['EURUSD', '1.12336', '1.12343', 7, 1],
    ['USDJPY', '138.677', '138.684', 7, 0],
    ['USDCAD', '1.31940', '1.31953', 13, 0],
    ['GBPCHF', '1.12351', '1.12367', 16, 1],
    ['CADJPY', '105.094', '105.118', 24, 0],
    ['GBPJPY', '181.556', '181.572', 16, 1],
    ['EURCAD', '1.48215', '1.48227', 12, 1],
    ['CADCHF', '0.65040', '0.65052', 12, 0],
    ['NZDJPY', '87.174', '87.201', 27, 0],
    ['NZDUSD', '0.62863', '0.62875', 12, 1],
    ['USOIL', '75.068', '75.107', 39, 0]
];
document.getElementById('quotes').innerHTML = quotes.map(function (q) {
    return '<tr class="' + (q[4] ? 'buy' : 'sell') + '"><td><svg width="11" height="11"><use href="#' + (q[4] ? 'up' : 'down') + '"/></svg>' + q[0] +
        '</td><td>' + q[1] + '</td><td>' + q[2] + '</td><td>' + q[3] + '</td></tr>';
}).join('');

var orders = [
    ['358630157', '2023.07.06 02:41:44', 'buy', 'xauusd', '1918.808', '1980.335', '61 527.00'],
    ['358634422', '2023.07.06 02:55:33', 'sell', 'usdjpy', '144.248', '138.684', '40 119.99'],
    ['359027398', '2023.07.10 07:33:20', 'buy', 'xauusd', '1924.039', '1980.335', '56 296.00'],
    ['359908624', '2023.07.18 07:32:05', 'buy', 'xauusd', '1964.002', '1980.335', '16 333.00']
];
document.getElementById('orders').innerHTML = orders.map(function (o) {
    var color = o[2] == 'buy' ? '#2779b5' : '#cf3a22';
    var cells = [o[1], o[2], '10.00', o[3], o[4], '0.000', '0.000', o[5], '0.00', '0.00'];
    return '<tr><td><svg width="16" height="16" color="' + color + '"><use href="#order"/></svg>' + o[0] + '</td><td>' +
        cells.join('</td><td>') + '</td><td>' + o[6] + ' <svg class="cls" width="9" height="9"><use href="#x"/></svg></td></tr>';
}).join('');

// candles, 8px apart: direction (1 up, 0 down), high, body top, body bottom, low
var candles = [
    [0,563,565,565,571],[1,540,545,567,567],[1,515,528,546,546],[1,498,506,528,537],[0,506,506,520,529],[1,514,516,520,529],
    [0,505,516,519,526],[0,504,519,553,557],[0,541,554,554,562],[1,538,554,554,563],[1,539,547,553,557],[0,547,547,558,561],
    [1,539,554,558,565],[1,419,478,554,564],[1,352,365,479,499],[1,348,350,365,396],[0,344,350,367,389],[1,330,330,367,370],
    [0,330,330,354,368],[1,347,349,354,358],[1,330,330,349,357],[0,330,330,352,352],[1,344,349,355,357],[1,347,349,349,353],
    [0,339,350,355,361],[1,331,332,356,362],[1,313,328,332,342],[1,319,326,328,339],[0,310,327,353,353],[0,342,355,370,370],
    [1,303,304,370,370],[0,299,304,313,336],[0,304,313,321,327],[0,320,321,329,334],[1,324,324,329,345],[0,323,325,330,348],
    [0,299,330,351,398],[1,316,342,350,358],[1,313,322,342,351],[0,315,322,373,376],[1,331,339,374,376],[1,325,328,339,351],
    [0,321,330,330,338],[1,324,330,330,333],[1,323,324,329,330],[0,321,327,329,330],[1,312,327,329,331],[0,323,328,334,343],
    [1,300,304,335,342],[0,296,304,314,315],[1,301,306,314,320],[0,306,307,325,327],[0,318,326,339,348],[0,327,339,360,369],
    [1,353,357,360,380],[0,346,358,363,368],[0,353,364,364,372],[1,355,365,365,373],[1,329,335,363,363],[0,304,335,351,357],
    [1,321,328,351,379],[1,323,328,328,411],[0,310,327,346,353],[1,335,338,347,355],[1,326,326,338,345],[0,320,327,335,337],
    [0,336,336,379,379],[1,367,371,379,379],[0,373,374,390,392],[1,388,388,390,406],[1,376,377,388,397],[0,366,378,394,400],
    [1,383,386,394,407],[0,384,387,399,409],[1,386,386,399,406],[1,357,383,386,389],[0,373,383,389,400],[0,372,390,397,414],
    [1,351,366,398,401],[1,336,341,366,379],[0,329,341,353,357],[1,347,350,353,358],[0,334,350,430,435],[1,403,413,430,456],
    [1,380,382,413,425],[1,372,377,382,407],[0,368,377,377,383],[1,371,372,377,397],[1,365,368,373,377],[0,360,368,370,378],
    [0,369,370,375,379],[1,373,373,375,378],[1,362,369,373,373],[1,357,369,369,377],[1,333,354,369,373],[1,338,338,354,367],
    [1,323,331,338,342],[1,319,329,331,333],[0,313,329,336,338],[1,312,314,336,349],[0,293,315,315,323],[1,302,315,315,325],
    [1,300,302,315,319],[1,291,302,302,314],[0,222,302,302,320],[1,232,251,302,323],[1,223,229,251,297],[1,132,148,229,231]
];
var prices = ['1983.920', '', '1976.550', '1972.810', '1969.070', '1965.440', '1961.700', '1957.960', '1954.220', '1950.480', '1946.850', '1943.110', '1939.370', '1935.630', '1932.000'];
var times = ['11 Jul 2023', '12 Jul 07:00', '12 Jul 15:00', '13 Jul 00:00', '13 Jul 08:00', '13 Jul 16:00', '14 Jul 01:00', '14 Jul 09:00', '14 Jul 17:00', '17 Jul 02:00', '17 Jul 10:00', '17 Jul 18:00', '18 Jul 03:00', '18 Jul 11:00'];

function text(x, y, w, s, extra) {
    return '<text x="' + x + '" y="' + y + '" textLength="' + w + '" lengthAdjust="spacingAndGlyphs" ' + (extra || '') + '>' + s + '</text>';
}

var out = '<path d="M331.500 109.500H1206.500V581.500H331.500z" fill="none" stroke="#fff"/>';
out += '<path d="M331 293.500H1206" stroke="#8fae94" stroke-dasharray="10 6 2 6"/>';
candles.forEach(function (c, i) {
    var x = 332 + i * 8, color = c[0] ? '#4cc357' : '#c22440';
    out += '<path d="M' + (x + .5) + ' ' + c[1] + 'V' + (c[4] + 1) + '" stroke="' + color + '"/>';
    if (c[2] == c[3])
        out += '<path d="M' + (i ? x - 2 : x) + ' ' + (c[2] + .5) + 'h5" stroke="' + color + '"/>';
    else
        out += '<rect x="' + (x - 1.5) + '" y="' + (c[2] + .5) + '" width="4" height="' + (c[3] - c[2]) + '" fill="' + (c[0] ? '#000' : '#fff') + '" stroke="' + color + '"/>';
});
prices.forEach(function (p, i) {
    var y = 116 + i * 33;
    if (!p) return;
    out += '<path d="M1206 ' + (y + .5) + 'h4" stroke="#fff"/>' + text(1211, y + 4, 38, p);
});
out += '<rect x="1207" y="143" width="46" height="11" fill="#fff"/>' + text(1211, 152, 38, '1980.335', 'style="fill:#000"');
times.forEach(function (t, i) {
    out += '<path d="M' + (332.5 + i * 64) + ' 582v3" stroke="#fff"/>' + text(331 + i * 64, 594, i ? 50 : 47, t);
});
out += '<path d="M334.500 120l4-4 4 4z" fill="#fff"/>';
out += text(346.5, 121, 55, 'XAUUSD,H1') + text(407, 121, 161, '1971.240 1982.126 1971.149 1980.335');
out += text(338.5, 291, 97, '#359908624 buy 10.00');
document.getElementById('chart').innerHTML = out;

// tiled watermark
var marks = '';
for (var r = 0; r < 4; r++)
    for (var k = 0; k < 5; k++)
        marks += '<text textLength="154" transform="translate(' + (60 + k * 250) + ',' + (178 + r * 250) + ') rotate(-31)">eahub.cn</text>';
document.getElementById('marks').innerHTML = marks;
```
